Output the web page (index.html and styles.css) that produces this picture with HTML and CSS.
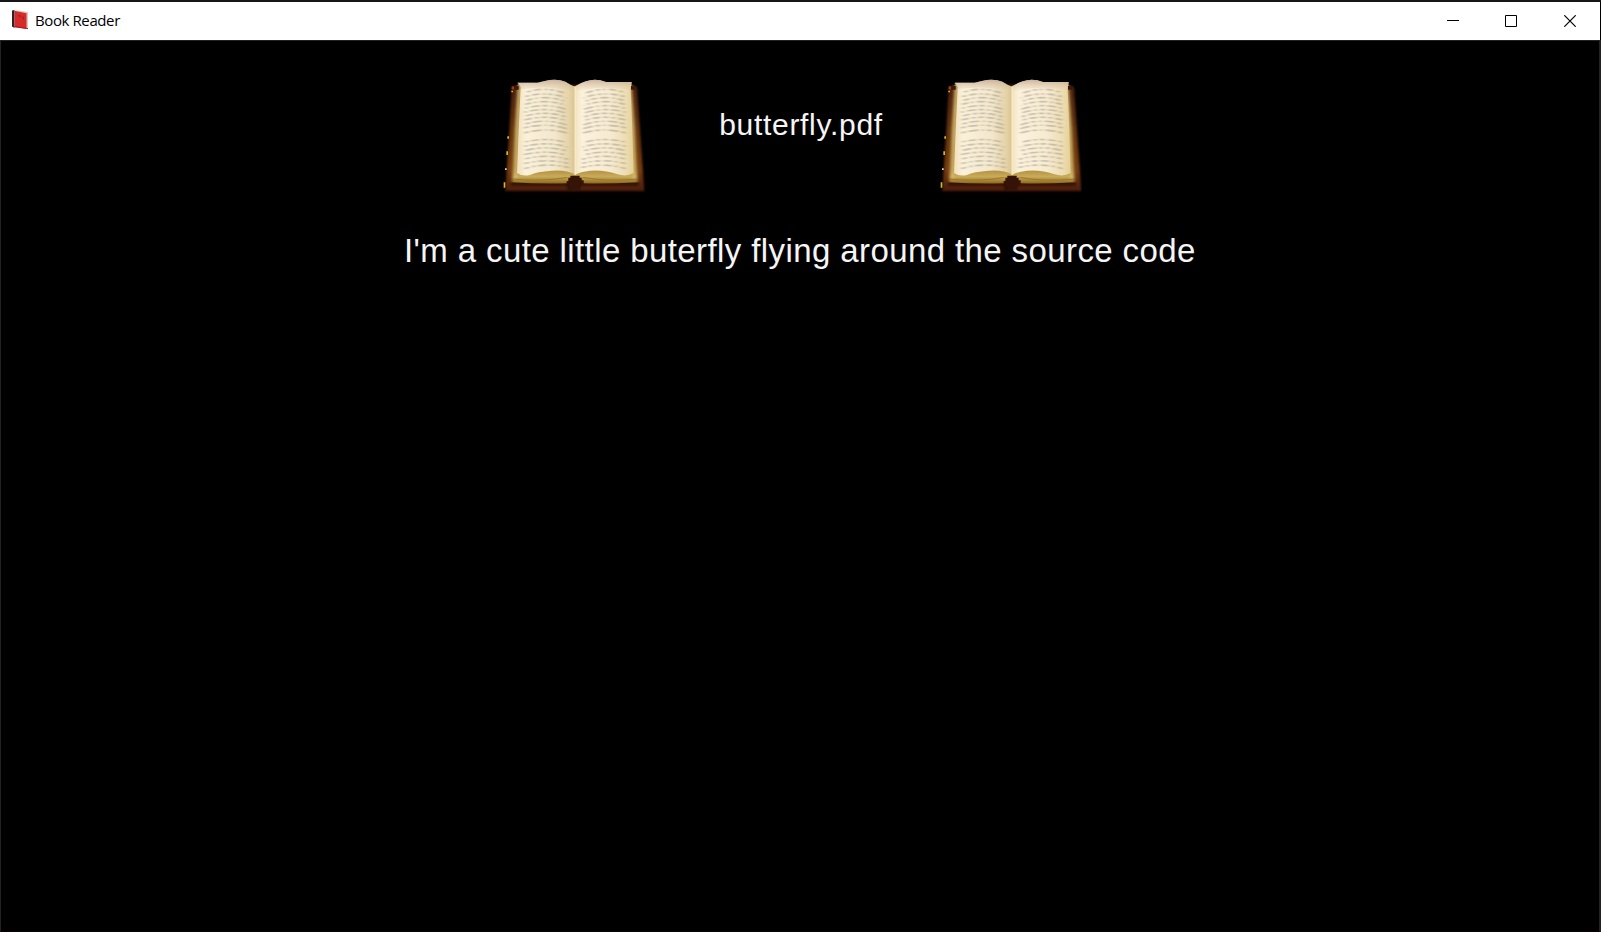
FILE: index.html
```
<!DOCTYPE html>
<html lang="en">
<head>
<meta charset="utf-8">
<title>Book Reader</title>
<link rel="stylesheet" href="styles.css">
</head>
<body>
<svg class="defs" width="0" height="0" aria-hidden="true">
  <defs>
    <linearGradient id="cover" x1="0" y1="0" x2="0" y2="1"><stop offset="0" stop-color="#4a2008"/><stop offset=".45" stop-color="#63320f"/><stop offset=".8" stop-color="#743b12"/><stop offset="1" stop-color="#4a1d08"/></linearGradient>
    <linearGradient id="edge" x1="0" y1="0" x2="0" y2="1"><stop offset="0" stop-color="#a9874c"/><stop offset=".85" stop-color="#ad8b3c"/><stop offset=".93" stop-color="#c9ab58"/><stop offset="1" stop-color="#8c691f"/></linearGradient>
    <linearGradient id="left" x1="0" y1="0" x2="1" y2="0"><stop offset="0" stop-color="#f0dfb8"/><stop offset=".15" stop-color="#fbf1da"/><stop offset=".65" stop-color="#f3e7cc"/><stop offset=".9" stop-color="#e5d3a8"/><stop offset="1" stop-color="#d9c48f"/></linearGradient>
    <linearGradient id="right" x1="0" y1="0" x2="1" y2="0"><stop offset="0" stop-color="#f1e2bd"/><stop offset=".12" stop-color="#fcf2dc"/><stop offset=".6" stop-color="#f6ead0"/><stop offset=".88" stop-color="#eddcb1"/><stop offset="1" stop-color="#e4cf96"/></linearGradient>
    <linearGradient id="top" x1="0" y1="0" x2="0" y2="1"><stop offset="0" stop-color="#c3a690" stop-opacity=".8"/><stop offset="1" stop-color="#dcc9aa" stop-opacity="0"/></linearGradient>
    <filter id="soft"><feGaussianBlur stdDeviation="2.5"/></filter>
    <filter id="gilt"><feGaussianBlur stdDeviation="4 2"/></filter>
    <filter id="ink" filterUnits="userSpaceOnUse" x="0" y="0" width="480" height="390"><feGaussianBlur stdDeviation="4 2.3"/></filter>
    <g id="lines" fill="none" stroke="#a39c8c" stroke-width="5">
      <path stroke-dasharray="12 9 22 10 9 8" d="M96 66Q155 48 213 71M91 80Q155 62 215 84"/>
      <path stroke-dasharray="19 8 8 10 26 9" d="M94 91Q155 73 213 95M90 103Q155 85 215 107"/>
      <path stroke-dasharray="8 9 28 8 15 10" d="M91 115Q155 97 216 119M88 127Q155 109 215 130"/>
      <path stroke-dasharray="23 9 12 8 17 8" d="M92 138Q155 120 215 142M88 150Q155 132 216 153"/>
      <path stroke-dasharray="14 8 30 10 7 9" d="M91 162Q155 144 215 165M87 174Q155 156 217 177M88 189Q155 171 217 189"/>
      <path stroke-dasharray="10 8 24 9 16 8" d="M91 216Q155 200 216 218M88 229Q155 213 217 231"/>
      <path stroke-dasharray="27 8 12 10 9 8" d="M92 241Q155 225 216 243M87 254Q155 238 217 256"/>
      <path stroke-dasharray="16 9 9 8 25 10" d="M90 267Q155 250 219 268M88 281Q155 264 218 280M88 296Q155 276 221 293"/>
    </g>
    <symbol id="book" viewBox="0 0 480 390">
      <path fill="url(#cover)" filter="url(#soft)" d="M50 52L70 44L412 45L426 52L435 180L448 364H31L43 180Z"/>
      <path fill="#2d1006" filter="url(#soft)" d="M48 337H429L432 346H258L250 364H222L214 346H47Z"/>
      <g filter="url(#gilt)">
        <path fill="url(#edge)" d="M68 45L239 60L410 45L421 180L428 337Q340 342 262 340H218Q130 342 51 337L58 180Z"/>
        <path d="M72 58L67 180L62 325M406 58L412 180L419 325" fill="none" stroke="#d8bd78" stroke-width="6"/>
        <path d="M57 328Q150 335 218 322M423 328Q330 335 262 322" fill="none" stroke="#9a762a" stroke-width="3"/>
      </g>
      <path fill="url(#left)" d="M68 38H128L150 33Q184 25 211 35Q230 47 240 49V313Q215 299 170 302Q125 305 105 315Q81 320 66 309L71 180L77 51Z"/>
      <path fill="url(#right)" d="M240 49Q256 39 273 34Q301 24 333 36H410L407 58L412 180L416 309Q395 322 365 312Q330 299 285 302Q255 305 240 315Z"/>
      <path fill="url(#top)" d="M68 38H128L150 33Q184 25 211 35Q230 47 240 49Q256 39 273 34Q301 24 333 36H410V62Q315 42 240 67Q155 42 68 60Z"/>
      <path d="M240 51V315" stroke="#fff2cf" stroke-width="4" opacity=".65"/>
      <g filter="url(#ink)" opacity=".55">
        <use href="#lines"/>
        <use href="#lines" transform="matrix(-1 0 0 1 480 0)"/>
      </g>
      <path fill="#351407" d="M226 317H254V323H260V331H266V342H261L251 363H229L219 342H215V333H220V323H226Z"/>
      <path fill="#9d3c0c" d="M50 49H58V58H50Z"/>
      <path fill="#3d1706" d="M57 48H71V59H57Z M408 48H422V59H408Z"/>
      <path fill="#d8b72b" d="M49 62h5v5h-5zM37 199h5v7h-5zM34 244h5v11h-5zM26 337h5v16h-5z"/>
      <path fill="#ddd" d="M30 295h5v5h-5z"/>
    </symbol>
  </defs>
</svg>
<div class="window">
  <header class="titlebar">
    <svg class="app-icon" viewBox="0 0 18 22">
      <path fill="#292427" d="M1 1.5L3.5 1V19L1 17.5Z"/>
      <path fill="#d8c8bd" d="M3.5 1L17 3V19L15 18V5Z"/>
      <path fill="#d62b29" d="M3.5 1.8L15.5 4.3V20L3.5 18Z"/>
      <path fill="#a71b20" d="M3.5 17L17 19V20L3.5 18.2Z"/>
      <path fill="none" stroke="#9b2226" d="M7 7l2-.5 1 2M11 8l2 .5-1 2"/>
    </svg>
    <span class="title">Book Reader</span>
    <div class="controls">
      <svg class="control" viewBox="0 0 12 12"><path d="M0 5.5H12"/></svg>
      <svg class="control" viewBox="0 0 12 12"><path d="M.5.5H11.5V11.5H.5Z"/></svg>
      <svg class="control close" viewBox="0 0 12 12"><path d="M.3.3L11.7 11.7M11.7.3L.3 11.7"/></svg>
    </div>
  </header>
  <main class="content">
    <div class="heading">
      <svg class="book"><use href="#book"/></svg>
      <h1 class="filename">butterfly.pdf</h1>
      <svg class="book"><use href="#book"/></svg>
    </div>
    <p class="page-text">I'm a cute little buterfly flying around the source code</p>
  </main>
</div>
</body>
</html>
```
FILE: styles.css
```
* { box-sizing: border-box; }
body { margin: 0; background: #000; overflow: hidden; }
.defs { position: absolute; }
.window { height: 932px; border-top: 2px solid #171518; display: flex; flex-direction: column; }
.titlebar { height: 38px; margin-right: 1px; padding: 0 24px 0 11px; display: flex; align-items: center; background: #fff; }
.app-icon { width: 18px; height: 22px; margin-top: -2px; }
.title { margin: -2px 0 0 6px; font: 15px/20px "Open Sans", "Noto Sans", sans-serif; letter-spacing: -.4px; color: #000; }
.controls { margin-left: auto; display: flex; gap: 46px; }
.control { width: 12px; height: 12px; fill: none; stroke: #000; stroke-width: 1; }
.close { margin-left: 1px; stroke-width: 1.2; }
.content { flex: 1; border: 1px solid #222; border-right-width: 2px; border-bottom: 1px solid #100; background: #000; font-family: "Liberation Sans", Arial, sans-serif; color: #f5f5f5; }
.heading { display: flex; padding: 29px 0 0 494px; }
.book { width: 160px; height: 130px; flex: none; }
.filename { width: 277px; margin: 37px 0 0; padding-left: 15px; text-align: center; font-size: 30px; line-height: 36px; font-weight: 400; letter-spacing: .7px; white-space: nowrap; }
.page-text { margin: 32px 0 0 403px; font-size: 33px; line-height: 38px; letter-spacing: .4px; white-space: nowrap; }
```
